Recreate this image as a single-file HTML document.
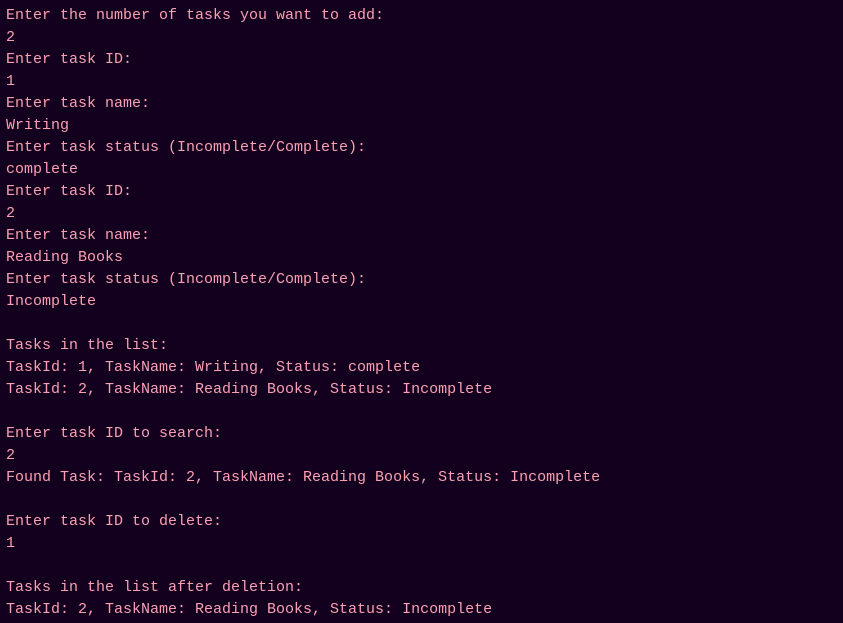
<!DOCTYPE html>
<html><head><style>
html,body{margin:0;padding:0;background:#12001e;width:843px;height:623px;overflow:hidden}
pre{margin:0;padding:5px 0 0 6px;font-family:"Liberation Mono",monospace;font-size:15px;line-height:22px;color:#fb9fb3}
</style></head><body><pre>Enter the number of tasks you want to add:
2
Enter task ID:
1
Enter task name:
Writing
Enter task status (Incomplete/Complete):
complete
Enter task ID:
2
Enter task name:
Reading Books
Enter task status (Incomplete/Complete):
Incomplete

Tasks in the list:
TaskId: 1, TaskName: Writing, Status: complete
TaskId: 2, TaskName: Reading Books, Status: Incomplete

Enter task ID to search:
2
Found Task: TaskId: 2, TaskName: Reading Books, Status: Incomplete

Enter task ID to delete:
1

Tasks in the list after deletion:
TaskId: 2, TaskName: Reading Books, Status: Incomplete</pre></body></html>
